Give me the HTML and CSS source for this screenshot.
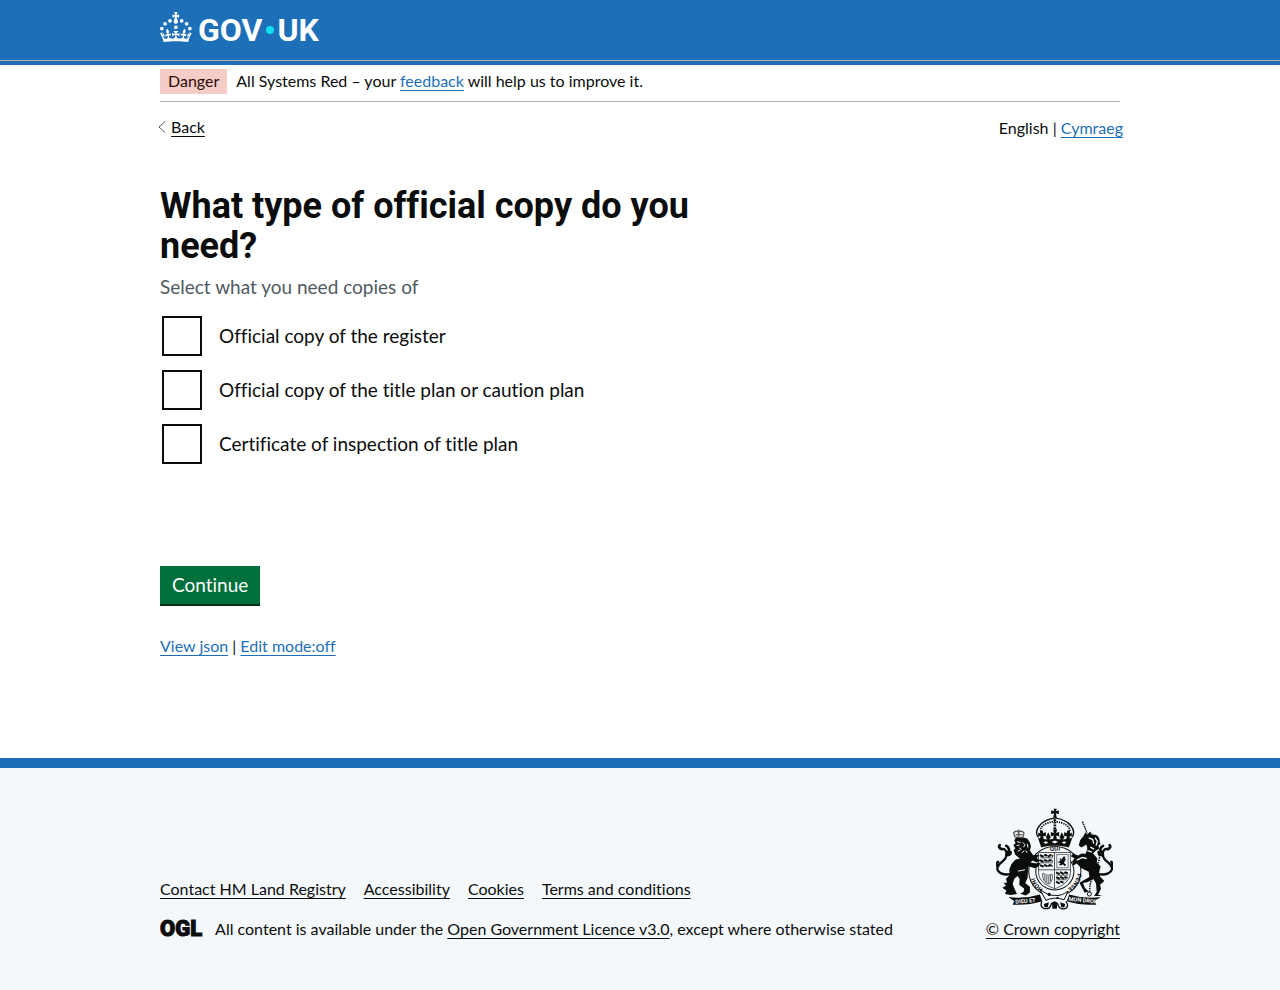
FILE: index.html
```html
<!DOCTYPE html>
<html lang="en">
<head>
<meta charset="utf-8">
<title>What type of official copy do you need?</title>
<link rel="stylesheet" href="styles.css">
</head>
<body>
<header class="header">
  <div class="container header-inner">
    <a class="logo" href="#" aria-label="GOV.UK">
      <svg class="crown" viewBox="0 0 64 60" aria-hidden="true">
        <circle cx="20" cy="17.6" r="3.7"/><circle cx="10.2" cy="23.5" r="3.7"/><circle cx="3.7" cy="33.2" r="3.7"/><circle cx="31.7" cy="30.6" r="3.7"/><circle cx="43.3" cy="17.6" r="3.7"/><circle cx="53.2" cy="23.5" r="3.7"/><circle cx="59.7" cy="33.2" r="3.7"/>
        <path d="M33.1,9.8c.2-.1.3-.3.5-.5l4.6,2.4v-6.8l-4.6,1.5c-.1-.2-.3-.3-.5-.5l1.9-5.9h-6.7l1.9,5.9c-.2.1-.3.3-.5.5l-4.6-1.5v6.8l4.6-2.4c.1.2.3.3.5.5l-2.6,8c-.9,2.8,1.2,5.7,4.1,5.7h0c3,0,5.1-2.9,4.1-5.7l-2.6-8ZM37,37.9s-3.4,3.8-4.1,6.1c2.2,0,4.2-.5,6.4-2.8l-.7,8.5c-2-2.8-4.4-4.1-5.7-3.8.1,3.1.5,6.7,5.8,7.2,3.7.3,6.7-1.5,7-3.8.4-2.6-2-4.3-3.7-1.6-1.4-4.5,2.4-6.1,4.9-3.2-1.9-4.5-1.8-7.7,2.4-10.9,3,4,2.6,7.3-1.2,11.1,2.4-1.3,6.2,0,4,4.6-1.2-2.8-3.7-2.2-4.2.2-.3,1.7.7,3.7,3,4.2,1.9.3,4.7-.9,7-5.9-1.3,0-2.4.7-3.9,1.7l2.4-8c.6,2.3,1.4,3.7,2.2,4.5.6-1.6.5-2.8,0-5.3l5,1.8c-2.6,3.6-5.2,8.7-7.3,17.5-7.4-1.1-15.7-1.7-24.5-1.7h0c-8.8,0-17.1.6-24.5,1.7-2.1-8.9-4.7-13.9-7.3-17.5l5-1.8c-.5,2.5-.6,3.7,0,5.3.8-.8,1.6-2.3,2.2-4.5l2.4,8c-1.5-1-2.6-1.7-3.9-1.7,2.3,5,5.2,6.2,7,5.9,2.3-.4,3.3-2.4,3-4.2-.5-2.4-3-3.1-4.2-.2-2.2-4.6,1.6-6,4-4.6-3.7-3.7-4.2-7.1-1.2-11.1,4.2,3.2,4.3,6.4,2.4,10.9,2.5-2.8,6.3-1.3,4.9,3.2-1.8-2.7-4.1-1-3.7,1.6.3,2.3,3.3,4.1,7,3.8,5.4-.5,5.7-4.2,5.8-7.2-1.3-.2-3.7,1-5.7,3.8l-.7-8.5c2.2,2.3,4.2,2.7,6.4,2.8-.7-2.3-4.1-6.1-4.1-6.1h10.6,0Z"/>
      </svg>
      <span class="word">GOV</span><span class="dot"></span><span class="word">UK</span>
    </a>
  </div>
</header>
<div class="container">
  <div class="phase">
    <strong class="tag">Danger</strong>
    <span class="phase-text">All Systems Red – your <a class="link" href="#">feedback</a> will help us to improve it.</span>
  </div>
  <div class="topnav">
    <a class="back" href="#"><svg class="chevron" viewBox="0 0 8 12" aria-hidden="true"><path d="M7 .5 1 6l6 5.500"/></svg><span class="back-text">Back</span></a>
    <nav class="lang">English | <a class="link" href="#">Cymraeg</a></nav>
  </div>
  <main class="main">
    <form class="form">
      <fieldset class="fieldset" aria-describedby="hint">
        <legend class="legend"><h1 class="title">What type of official copy do you need?</h1></legend>
        <p class="hint" id="hint">Select what you need copies of</p>
        <div class="options">
          <div class="option"><input class="box" type="checkbox" id="c1"><label class="label" for="c1">Official copy of the register</label></div>
          <div class="option"><input class="box" type="checkbox" id="c2"><label class="label" for="c2">Official copy of the title plan or caution plan</label></div>
          <div class="option"><input class="box" type="checkbox" id="c3"><label class="label" for="c3">Certificate of inspection of title plan</label></div>
        </div>
      </fieldset>
      <button class="button" type="button">Continue</button>
    </form>
    <p class="tools"><a class="link" href="#">View json</a> | <a class="link" href="#">Edit mode:off</a></p>
  </main>
</div>
<footer class="footer">
  <div class="container footer-inner">
    <div class="meta">
      <ul class="links">
        <li><a class="flink" href="#">Contact HM Land Registry</a></li>
        <li><a class="flink" href="#">Accessibility</a></li>
        <li><a class="flink" href="#">Cookies</a></li>
        <li><a class="flink" href="#">Terms and conditions</a></li>
      </ul>
      <div class="licence">
        <span class="ogl">OGL</span>
        <span>All content is available under the <a class="flink" href="#">Open Government Licence v3.0</a>, except where otherwise stated</span>
      </div>
    </div>
    <a class="copyright" href="#">
      <svg class="crest" viewBox="50 23 350 307" aria-hidden="true">
        <defs>
          <path id="ring-top" d="M161 214A65 63 0 0 1 291 214"/>
          <path id="ring-left" d="M218 276A64 62 0 0 1 162 205"/>
          <path id="ring-right" d="M290 190A64 62 0 0 1 236 275"/>
          <g id="tail" fill="none" stroke="#0b0c0c" stroke-linecap="round">
            <path stroke-width="7" d="M92 222C72 226 52 218 53 203C55 187 81 183 81 162C81 151 74 144 65 147"/>
            <path stroke-width="8" d="M82 160C92 151 88 141 80 137M67 147C57 145 57 138 60 135M80 165C89 165 93 160 93 156M55 198C50 193 52 188 55 185"/>
          </g>
        </defs>
        <!-- garter and shield -->
        <ellipse cx="226" cy="214" rx="80" ry="77" fill="#0b0c0c"/>
        <ellipse cx="226" cy="214" rx="77" ry="74" fill="#f4f8fb"/>
        <ellipse cx="226" cy="214" rx="59" ry="57" fill="#0b0c0c"/>
        <ellipse cx="226" cy="214" rx="56" ry="54" fill="#f4f8fb"/>
        <g class="motto">
          <text><textPath href="#ring-top" startOffset="50%" text-anchor="middle">QUI</textPath></text>
          <text><textPath href="#ring-left" startOffset="50%" text-anchor="middle">HONI</textPath></text>
          <text><textPath href="#ring-right" startOffset="50%" text-anchor="middle">PENSE</textPath></text>
        </g>
        <path d="M177 157H273V218C272 244 247 258 226 266C202 257 178 244 177 218Z" fill="#f4f8fb" stroke="#555" stroke-width="3"/>
        <path d="M225 157V264M177 209H273" stroke="#555" stroke-width="3"/>
        <g fill="none" stroke="#0b0c0c" stroke-width="6">
          <path d="M181 165l9 4 8-5 8 5 7-4 8 3M181 180l9 4 6-4 9 4 6-4 9 3M181 195l9 4 6-4 9 4 6-4 9 3" stroke-dasharray="12 2"/>
          <path d="M230 217l8 4 6-4 8 4 6-4 8 3M230 231l8 4 6-4 8 4 6-4 6 3M230 245l8 4 6-4 8 2" stroke-dasharray="12 2"/>
          <path d="M183 173h37M183 188h37M231 225h36M231 239h30" stroke-width="2"/>
        </g>
        <rect x="232" y="163" width="34" height="40" fill="none" stroke="#777" stroke-width="3"/>
        <path d="M240 173l7 5 4-8 7-1-2 6 4 3-4 4-2 7 6 4-4 5-6-6-5 4-7-2 5-3-2-4-5 2 2-6 5-1Z" fill="#0b0c0c"/>
        <path d="M190 219C187 235 195 249 209 252C219 242 221 229 217 222C209 226 199 227 190 219ZM196 225V243M202 227V248M208 227V249M213 225V244" fill="none" stroke="#555" stroke-width="3"/>
        <!-- royal crown -->
        <path d="M176 111C162 92 180 61 226 53C274 60 291 91 278 111Z" fill="#f4f8fb"/>
        <g fill="#0b0c0c">
          <path d="M222 25h10l-3 8 9-3v12l-9-3 3 13h-11l3-13-9 3V30l9 3Z"/>
          <path d="M175 112C184 120 207 116 226 116C246 116 268 120 279 112L268 142C251 135 202 135 185 142Z"/>
          <path d="M181 92l8-2 2 8 8-2v12l-8-1 2 12h-12l2-12-7 2v-12l6 3ZM272 92l-8-2-2 8-8-2v12l8-1-2 12h12l-2-12 7 2v-12l-6 3ZM221 87h12l-3 11 9-3v14l-9-3 3 14h-13l3-14-9 3V95l9 3ZM206 96l8 16-8 8-7-8ZM247 96l8 16-8 8-7-8Z"/>
        </g>
        <g fill="none" stroke="#0b0c0c">
          <path stroke-width="4" d="M176 111C162 92 180 61 226 53C274 60 291 91 278 111"/>
          <path stroke-width="5" stroke-dasharray="4 3" d="M184 94C180 78 198 67 226 63C254 67 274 78 270 94"/>
          <path stroke-width="8" stroke-dasharray="5 3" d="M226 57V90"/>
        </g>
        <path d="M192 126l7-3 7 4-7 4ZM216 125l10-4 10 4-10 5ZM247 127l7-4 7 3-7 5Z" fill="#f4f8fb"/>
        <!-- lion -->
        <use href="#tail"/>
        <g fill="#0b0c0c">
          <path d="M109 112L117 109L143 115L151 127L154 139L151 151L161 165L178 163L172 174L184 181L171 187L159 181L149 187L174 190L184 187L177 198L166 204L147 198L145 216L144 234L137 249L151 260L151 277L139 286L122 281L132 275L134 266L119 254L120 237L114 228L104 236L99 252L105 267L112 282L93 285L76 282L80 271L68 263L79 257L72 248L82 248L79 236L90 225L89 207L96 191L108 178L121 175L107 164L102 150L107 144L101 134L108 129L104 121Z"/>
        </g>
        <g fill="none" stroke="#f4f8fb" stroke-width="3">
          <path d="M112 124l11 3M111 136l9-2M119 143l7 5M129 126l7 7-4 8M143 131l2 11M114 154l8-5M126 158l8-6M138 151l5 7M115 213l21-4"/>
        </g>
        <path d="M106 110L102 98Q108 90 117 95Q127 90 133 98L130 112Z" fill="#f4f8fb" stroke="#555" stroke-width="4"/>
        <path d="M117 88v20M108 103h20" stroke="#555" stroke-width="4"/>
        <!-- unicorn -->
        <use href="#tail" transform="matrix(-1 0 0 1 451 0)"/>
        <g fill="#0b0c0c">
          <path d="M318 96L324 102L333 94L337 103C353 101 362 111 361 125L364 131L357 135L360 146L350 151L341 159L354 175L352 187L364 199L359 217L363 230L375 243L362 254L365 266L356 284L369 288H344L352 276L350 251L342 237L325 246L311 249L316 263L328 274L316 278L305 258L300 248L330 231L328 215L306 204L292 190L282 196L278 184L285 174L274 168L281 160L296 166L307 160L319 161L324 145L321 133L306 142L298 136L302 120L312 108Z"/>
        </g>
        <g fill="none" stroke="#f4f8fb" stroke-width="4">
          <path d="M328 113l12 5 3 12M347 112l7 11-4 13M333 141l11 6M324 151l14 5M292 180l17-8 13 3"/>
        </g>
        <g fill="none" stroke="#0b0c0c">
          <path stroke-width="4" d="M309 64L323 98" stroke-dasharray="5 2"/>
          <path stroke-width="5" stroke-dasharray="4 3" d="M357 158C369 178 343 203 359 216C341 227 330 241 331 276"/>
          <circle cx="330" cy="282" r="6" stroke-width="3"/>
        </g>
        <!-- scroll -->
        <path d="M86 291Q132 298 181 283L188 304Q145 317 99 314L104 304ZM364 291Q318 298 269 283L262 304Q305 317 351 314L346 304Z" fill="#0b0c0c"/>
        <path d="M181 267Q206 288 225 286Q246 289 266 273L254 299Q224 289 199 301Z" fill="#f4f8fb" stroke="#0b0c0c" stroke-width="3"/>
        <path d="M187 304Q180 320 193 325Q212 330 215 312Q224 303 235 312Q238 331 259 325Q270 317 259 304" fill="none" stroke="#0b0c0c" stroke-width="4"/>
        <path d="M217 309q8-9 17 0l-2 17h-13ZM193 312l15-5-3 15h-10ZM257 312l-15-5 3 15h10Z" fill="#0b0c0c"/>
        <circle cx="209" cy="283" r="5" fill="#0b0c0c"/><circle cx="234" cy="293" r="3" fill="#0b0c0c"/>
        <g class="scroll-text"><text x="108" y="311" transform="rotate(-5 108 311)">DIEU ET</text><text x="267" y="302" transform="rotate(6 267 302)">MON DROIT</text></g>
      </svg>
      <span class="flink">© Crown copyright</span>
    </a>
  </div>
</footer>
</body>
</html>
```
FILE: styles.css
```css
* { box-sizing: border-box; }
body {
  margin: 0;
  min-height: 100vh;
  display: flex;
  flex-direction: column;
  background: #fff;
  color: #0b0c0c;
  font-family: Lato, "Liberation Sans", sans-serif;
  font-variant-ligatures: none;
  font-size: 16px;
  line-height: 20px;
}
.container { width: calc(100% - 60px); max-width: 960px; margin: 0 auto; }
.header { background: #1d70b8; border-bottom: 4px solid #1d70b8; }
.header::after { content: ""; display: block; height: 1px; background: #b1b4b6; }
.header-inner { display: flex; padding-top: 12px; padding-bottom: 18px; }
.logo { display: flex; align-items: center; color: #fff; text-decoration: none; height: 30px; }
.crown { width: 32px; height: 30px; fill: #fff; margin-right: 6px; }
.word { font-family: Roboto, sans-serif; font-size: 32px; line-height: 30px; font-weight: 700; padding-top: 6px; }
.dot { width: 8px; height: 8px; border-radius: 50%; background: #11e0f1; margin: 6px 3px 0 4px; }

.phase { display: flex; align-items: center; gap: 9px; padding: 4px 0 7px; border-bottom: 1px solid #b1b4b6; }
.tag { font-weight: 400; background: #f4cdc6; color: #2a0b06; padding: 2px 8px 3px; }
.phase-text { padding-bottom: 1px; }
.link { color: #1d70b8; text-decoration: underline; text-decoration-thickness: 1px; text-underline-offset: 3px; }
.topnav { display: flex; justify-content: space-between; align-items: flex-start; padding-top: 15px; }
.back { display: inline-flex; align-items: center; color: #0b0c0c; text-decoration: none; }
.back-text { text-decoration: underline; text-decoration-thickness: 1px; text-underline-offset: 3px; }
.chevron { width: 8px; height: 12px; margin: 0 5px 0 -2px; fill: none; stroke: #505a5f; stroke-width: 1; }
.lang { margin: 1px -3px 0 0; }

.main { padding: 48px 0 102px; }
.form { max-width: 610px; }
.fieldset { border: 0; margin: 0; padding: 0; min-width: 0; }
.legend { padding: 0; }
.title { margin: 0; font-family: Roboto, sans-serif; font-size: 36px; line-height: 40px; font-weight: 700; }
.hint { margin: 8px 0 17px; font-size: 19px; line-height: 25px; color: #505a5f; }
.options { display: grid; gap: 14px; padding-left: 2px; }
.option { display: flex; align-items: center; gap: 17px; }
.box { appearance: none; flex: none; width: 40px; height: 40px; margin: 0; border: 2px solid #0b0c0c; background: #fff; }
.label { font-size: 19px; line-height: 25px; padding-bottom: 1px; }
.button { display: block; margin-top: 102px; padding: 6px 12px 7px; border: 0; border-radius: 0; background: #00703c; color: #fff; box-shadow: 0 2px 0 #002d18; font: inherit; font-variant-ligatures: none; font-size: 19px; line-height: 25px; }
.tools { margin: 32px 0 0; }

.footer { flex: 1; background: #f4f8fb; border-top: 10px solid #1d70b8; padding: 40px 0; }
.footer-inner { display: flex; justify-content: space-between; align-items: flex-end; }
.links { display: flex; flex-wrap: wrap; gap: 18px; list-style: none; margin: 0 0 20px; padding: 0; }
.licence { display: flex; align-items: center; gap: 13px; }
.ogl { font-family: Roboto, sans-serif; font-weight: 900; font-size: 22px; -webkit-text-stroke: 1px #0b0c0c; }
.flink { color: #0b0c0c; text-decoration: underline; text-decoration-thickness: 1px; text-underline-offset: 3px; }
.copyright { display: flex; flex-direction: column; align-items: flex-end; gap: 9px; color: #0b0c0c; text-decoration: none; }
.crest { width: 117px; height: 102px; margin-right: 7px; display: block; }
.motto { font: 700 18px Roboto, sans-serif; fill: #0b0c0c; }
.scroll-text { font: 700 17px Roboto, sans-serif; fill: #f4f8fb; }
```
